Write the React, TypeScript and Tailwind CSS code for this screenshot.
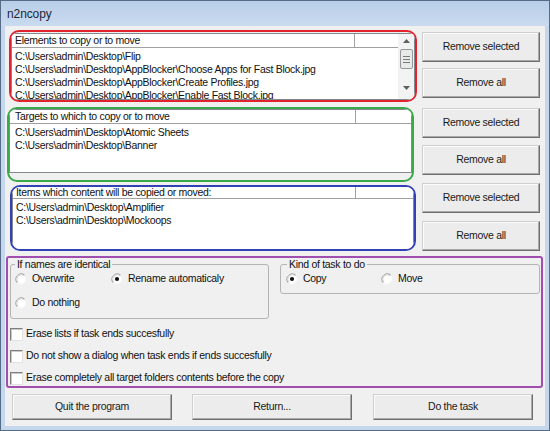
import React from "react";

function Btn({ children, className }: { children: React.ReactNode; className: string }) {
  return (
    <div
      className={`flex items-center justify-center shrink-0 bg-[#ececec] border border-t-[#cfcfcf] border-l-[#cfcfcf] border-b-[#6f6f6f] border-r-[#6f6f6f] shadow-[inset_-1px_-1px_0_#a9a9a9,inset_1px_1px_0_#fbfbfb] text-[#1a1a1a] ${className}`}
    >
      {children}
    </div>
  );
}

function Radio({ checked }: { checked?: boolean }) {
  return (
    <svg width="12" height="12" viewBox="0 0 12 12" className="shrink-0">
      <circle cx="6" cy="6" r="5.2" fill="#ffffff" />
      <path d="M2.2 9.8 A5.4 5.4 0 0 1 9.8 2.2" fill="none" stroke="#9a9a9a" strokeWidth="1" />
      <path d="M2.9 9.1 A4.4 4.4 0 0 1 9.1 2.9" fill="none" stroke="#d8d8d8" strokeWidth="1" />
      <path d="M9.8 2.2 A5.4 5.4 0 0 1 2.2 9.8" fill="none" stroke="#f2f2f2" strokeWidth="1" />
      {checked && <circle cx="6" cy="6" r="2.1" fill="#111111" />}
    </svg>
  );
}

function Check() {
  return (
    <div className="w-[13px] h-[13px] shrink-0 bg-white border border-t-[#7f7f7f] border-l-[#7f7f7f] border-b-[#e2e2e2] border-r-[#e2e2e2] shadow-[inset_1px_1px_0_#c9c9c9]" />
  );
}

function Scroll() {
  return (
    <div className="w-[16px] shrink-0 flex flex-col items-center bg-[#f3f3f3] pb-[4px]">
      <div className="h-[14px] flex items-center justify-center">
        <svg width="7" height="4" viewBox="0 0 7 4">
          <path d="M0 4 L3.5 0 L7 4 Z" fill="#5f5f5f" />
        </svg>
      </div>
      <div className="mt-[1px] w-[13px] h-[20px] rounded-[2px] border border-[#979797] bg-[#e9e9e9] flex flex-col items-center justify-center gap-[2px]">
        <div className="w-[7px] h-[1px] bg-[#7a7a7a]" />
        <div className="w-[7px] h-[1px] bg-[#7a7a7a]" />
        <div className="w-[7px] h-[1px] bg-[#7a7a7a]" />
      </div>
      <div className="flex-1" />
      <div className="h-[14px] flex items-center justify-center">
        <svg width="7" height="4" viewBox="0 0 7 4">
          <path d="M0 0 L3.5 4 L7 0 Z" fill="#5f5f5f" />
        </svg>
      </div>
    </div>
  );
}

function ListBox({
  title,
  items,
  scroll,
  colClass,
  padClass,
  headClass,
  boxClass,
}: {
  title: string;
  items: string[];
  scroll?: boolean;
  colClass: string;
  padClass: string;
  headClass: string;
  boxClass: string;
}) {
  return (
    <div className={`flex bg-white border-[#828790] overflow-hidden ${boxClass}`}>
      <div className="flex-1 flex flex-col min-w-0">
        <div className={`flex shrink-0 border-b border-[#a0a0a0] ${headClass}`}>
          <div className={`border-r border-[#a0a0a0] whitespace-nowrap overflow-hidden ${colClass} ${padClass}`}>{title}</div>
          <div className="flex-1" />
        </div>
        <div className={`pt-[2px] ${padClass}`}>
          {items.map((t) => (
            <div key={t} className="h-[13px] leading-[13px] whitespace-nowrap">
              {t}
            </div>
          ))}
        </div>
      </div>
      {scroll && <Scroll />}
    </div>
  );
}

export default function App() {
  return (
    <div className="w-[550px] h-[431px] bg-[#c4d7ed] border border-[#566c86] flex flex-col font-['Liberation_Sans',Arial,sans-serif] text-[10.5px] tracking-[-0.3px] text-[#111111]">
      <div className="h-[25px] shrink-0 flex items-center pl-[6px] pt-[1px] text-[12px] tracking-[-0.1px] text-[#1c2838] bg-gradient-to-b from-[#b8cde8] to-[#cadbef]">
        n2ncopy
      </div>
      <div className="mx-[4px] mb-[4px] h-[400px] bg-[#f0f0f0] flex flex-col">
        <div className="mt-[4px] flex">
          <div className="w-[413px] flex flex-col">
            <div className="ml-[4px] w-[408px] h-[72px] border-2 border-[#e1232d] rounded-[10px] pt-[1px] overflow-hidden">
              <ListBox
                title="Elements to copy or to move"
                items={[
                  "C:\\Users\\admin\\Desktop\\Flip",
                  "C:\\Users\\admin\\Desktop\\AppBlocker\\Choose Apps for Fast Block.jpg",
                  "C:\\Users\\admin\\Desktop\\AppBlocker\\Create Profiles.jpg",
                  "C:\\Users\\admin\\Desktop\\AppBlocker\\Enable Fast Block.jpg",
                ]}
                scroll
                colClass="w-[343px]"
                padClass="pl-[3px]"
                headClass="h-[14px] leading-[13px]"
                boxClass="h-[67px] border"
              />
            </div>
            <div className="mt-[5px] ml-[2px] w-[407px] h-[75px] border-2 border-[#3ba94a] rounded-[10px] overflow-hidden">
              <ListBox
                title="Targets to which to copy or to move"
                items={["C:\\Users\\admin\\Desktop\\Atomic Sheets", "C:\\Users\\admin\\Desktop\\Banner"]}
                colClass="w-[346px]"
                padClass="pl-[5px]"
                headClass="h-[14px] leading-[13px]"
                boxClass="h-[64px] border"
              />
            </div>
            <div className="mt-[3px] ml-[5px] w-[406px] h-[66px] border-2 border-[#3242b4] rounded-[10px] overflow-hidden">
              <ListBox
                title="Items which content will be copied or moved:"
                items={["C:\\Users\\admin\\Desktop\\Amplifier", "C:\\Users\\admin\\Desktop\\Mockoops"]}
                colClass="w-[343px]"
                padClass="pl-[3px]"
                headClass="h-[12px] leading-[11px]"
                boxClass="h-[70px] border-x border-b"
              />
            </div>
          </div>
          <div className="ml-[4px] w-[118px] pt-[2px] flex flex-col">
            <Btn className="h-[30px]">Remove selected</Btn>
            <Btn className="h-[30px] mt-[6px]">Remove all</Btn>
            <Btn className="h-[30px] mt-[10px]">Remove selected</Btn>
            <Btn className="h-[30px] mt-[7px]">Remove all</Btn>
            <Btn className="h-[30px] mt-[8px]">Remove selected</Btn>
            <Btn className="h-[30px] mt-[8px]">Remove all</Btn>
          </div>
        </div>

        <div className="mt-[5px] ml-[1px] w-[537px] h-[132px] border-2 border-[#a04fae] rounded-[3px] flex flex-col">
          <div className="mt-[6px] ml-[2px] flex items-start">
            <div className="w-[259px] h-[55px] border border-[#b4b4b4] rounded-[3px] flex flex-col">
              <div className="-mt-[7px] ml-[4px] px-[2px] self-start h-[12px] leading-[12px] bg-[#f0f0f0]">
                If names are identical
              </div>
              <div className="mt-[3px] ml-[4px] flex items-center h-[12px]">
                <div className="w-[96px] flex items-center gap-[5px]">
                  <Radio />
                  <span>Overwrite</span>
                </div>
                <div className="flex items-center gap-[5px]">
                  <Radio checked />
                  <span>Rename automaticaly</span>
                </div>
              </div>
              <div className="mt-[12px] ml-[4px] flex items-center gap-[5px] h-[12px]">
                <Radio />
                <span>Do nothing</span>
              </div>
            </div>
            <div className="ml-[11px] w-[260px] h-[30px] border border-[#b4b4b4] rounded-[3px] flex flex-col">
              <div className="-mt-[7px] ml-[6px] px-[2px] self-start h-[12px] leading-[12px] bg-[#f0f0f0]">
                Kind of task to do
              </div>
              <div className="mt-[3px] ml-[5px] flex items-center h-[12px]">
                <div className="w-[95px] flex items-center gap-[5px]">
                  <Radio checked />
                  <span>Copy</span>
                </div>
                <div className="flex items-center gap-[5px]">
                  <Radio />
                  <span>Move</span>
                </div>
              </div>
            </div>
          </div>
          <div className="mt-[8px] ml-[2px] h-[14px] flex items-center gap-[3px]">
            <Check />
            <span>Erase lists if task ends succesfully</span>
          </div>
          <div className="mt-[8px] ml-[2px] h-[14px] flex items-center gap-[3px]">
            <Check />
            <span>Do not show a dialog when task ends if ends succesfully</span>
          </div>
          <div className="mt-[8px] ml-[2px] h-[14px] flex items-center gap-[3px]">
            <Check />
            <span>Erase completely all target folders contents before the copy</span>
          </div>
        </div>

        <div className="mt-[6px] h-[26px] flex">
          <Btn className="ml-[7px] w-[160px] h-[26px]">Quit the program</Btn>
          <Btn className="ml-[20px] w-[160px] h-[26px]">Return...</Btn>
          <Btn className="ml-[21px] w-[160px] h-[26px]">Do the task</Btn>
        </div>
      </div>
    </div>
  );
}
